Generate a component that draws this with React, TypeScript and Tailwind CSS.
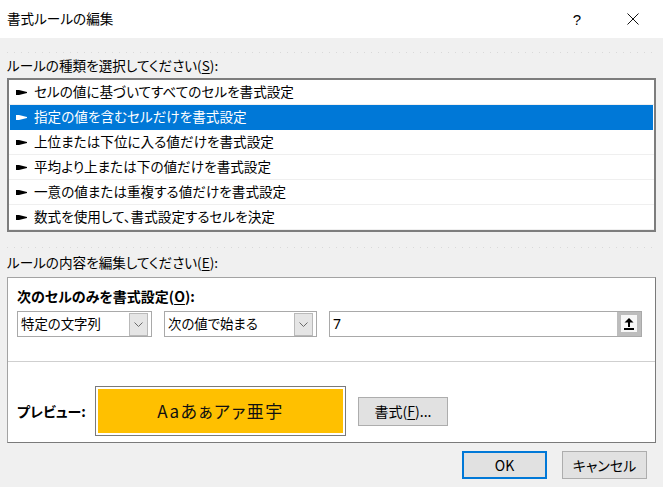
import React from "react";

const Flag = ({ color }: { color: string }) => (
  <svg width="11" height="5" viewBox="0 0 11 5" className="shrink-0">
    <polygon points="0,0 3,0 11,2 11,3 3,5 0,5" fill={color} />
  </svg>
);

const Chevron = () => (
  <div className="absolute right-[3px] top-[1px] w-[19px] h-[23px] bg-[#e5e5e5] border border-[#b9b9b9] flex items-center justify-center">
    <svg width="9" height="5" viewBox="0 0 9 5">
      <polyline points="0.5,0.5 4.5,4.5 8.5,0.5" fill="none" stroke="#6a6a6a" strokeWidth="1" />
    </svg>
  </div>
);

const Dotted = ({ className }: { className: string }) => (
  <div
    className={
      "h-px bg-[linear-gradient(to_right,#d9d9d9_1px,transparent_1px)] [background-size:7px_1px] " +
      className
    }
  />
);

export default function App() {
  const rows = [
    "セルの値に基づいてすべてのセルを書式設定",
    "指定の値を含むセルだけを書式設定",
    "上位または下位に入る値だけを書式設定",
    "平均より上または下の値だけを書式設定",
    "一意の値または重複する値だけを書式設定",
    "数式を使用して、書式設定するセルを決定",
  ];
  return (
    <div className="w-[663px] h-[487px] bg-[#f0f0f0] flex flex-col overflow-hidden text-black font-['Noto_Sans_CJK_JP','Noto_Sans',sans-serif] [font-feature-settings:'palt']">
      {/* title bar */}
      <div className="h-[38px] bg-white flex items-center shrink-0">
        <span className="ml-[7px] text-[13.6px] leading-none">書式ルールの編集</span>
        <span className="ml-auto mr-[46px] text-[15px] leading-none font-['Liberation_Sans',sans-serif] font-light">?</span>
        <svg width="12" height="12" viewBox="0 0 12 12" className="mr-[24px]">
          <line x1="0.5" y1="0.5" x2="11.5" y2="11.5" stroke="#111" strokeWidth="1" />
          <line x1="11.5" y1="0.5" x2="0.5" y2="11.5" stroke="#111" strokeWidth="1" />
        </svg>
      </div>

      <div className="px-[7px] flex flex-col">
        <Dotted className="mt-[14px]" />
        <div className="mt-[3px] h-[18px] leading-[18px] text-[13.6px]">
          ルールの種類を選択してください(<span className="underline underline-offset-2">S</span>):
        </div>

        {/* list box */}
        <div className="mt-[4px] h-[154px] border-2 border-[#7d7d7d] bg-white flex flex-col">
          {rows.map((r, i) => {
            const sel = i === 1;
            return (
              <div
                key={i}
                className={
                  "h-[25px] flex items-center border-b " +
                  (sel
                    ? "bg-[#0078d7] text-white border-[#0078d7] mx-[1px] pl-[6px]"
                    : "border-[#efefef] pl-[7px]")
                }
              >
                <Flag color={sel ? "#ffffff" : "#000000"} />
                <span className="ml-[7px] text-[13.6px] leading-none">{r}</span>
              </div>
            );
          })}
        </div>

        <Dotted className="mt-[15px]" />
        <div className="mt-[5px] h-[18px] leading-[18px] text-[13.6px]">
          ルールの内容を編集してください(<span className="underline underline-offset-2">E</span>):
        </div>

        {/* content box */}
        <div className="mt-[6px] h-[166px] bg-white border border-[#a3a3a3] border-r-[#7a7a7a] border-b-[#7a7a7a] flex flex-col">
          <div className="mt-[9px] ml-[9px] h-[18px] leading-[18px] text-[14px] font-bold">
            次のセルのみを書式設定(<span className="underline underline-offset-2">O</span>):
          </div>
          <div className="mt-[6px] ml-[9px] flex gap-[12px] h-[26px]">
            <div className="relative w-[135px] h-[26px] border border-[#a9a9a9] bg-white flex items-center pl-[3px]">
              <span className="text-[13.4px] leading-none">特定の文字列</span>
              <Chevron />
            </div>
            <div className="relative w-[153px] h-[26px] border border-[#a9a9a9] bg-white flex items-center pl-[3px]">
              <span className="text-[13.4px] leading-none">次の値で始まる</span>
              <Chevron />
            </div>
            <div className="w-[313px] h-[26px] border border-[#a9a9a9] bg-white flex items-center">
              <span className="ml-[3px] text-[14px] leading-none font-['Noto_Sans',sans-serif]">7</span>
              <div className="ml-auto h-[24px] w-[24px] bg-[#bdbdbd] pl-[4px] pt-[3px]">
                <div className="w-[16px] h-[17px] bg-[#f7f7f7]">
                  <svg width="16" height="17" viewBox="0 0 16 17">
                    <polygon points="8,3 12.5,7.5 3.5,7.5" fill="#000" />
                    <rect x="7" y="7" width="2" height="5" fill="#000" />
                    <rect x="3" y="13" width="10" height="2" fill="#000" />
                  </svg>
                </div>
              </div>
            </div>
          </div>
          <div className="mt-[24px] h-px bg-[#cfcfcf]" />
          <div className="mt-[24px] ml-[9px] flex items-center">
            <div className="w-[78px] text-[14px] font-bold leading-none">プレビュー:</div>
            <div className="w-[251px] h-[50px] border border-[#7a7a7a] p-[2px] bg-white">
              <div className="w-full h-full bg-[#ffc000] flex items-center justify-center text-[17px] text-[#111] tracking-[1.5px]">
                Aaあぁアァ亜宇
              </div>
            </div>
            <div className="ml-[12px] w-[90px] h-[29px] bg-[#e1e1e1] border border-[#adadad] flex items-center justify-center text-[14px] leading-none">
              書式(<span className="underline underline-offset-2">F</span>)...
            </div>
          </div>
        </div>

        {/* buttons */}
        <div className="mt-[8px] flex justify-end gap-[15px] pr-[9px]">
          <div className="w-[85px] h-[28px] bg-[#e1e1e1] border-2 border-[#0078d7] flex items-center justify-center text-[14px] leading-none">
            OK
          </div>
          <div className="w-[85px] h-[28px] bg-[#e1e1e1] border border-[#adadad] flex items-center justify-center text-[14px] leading-none">
            キャンセル
          </div>
        </div>
      </div>
    </div>
  );
}
